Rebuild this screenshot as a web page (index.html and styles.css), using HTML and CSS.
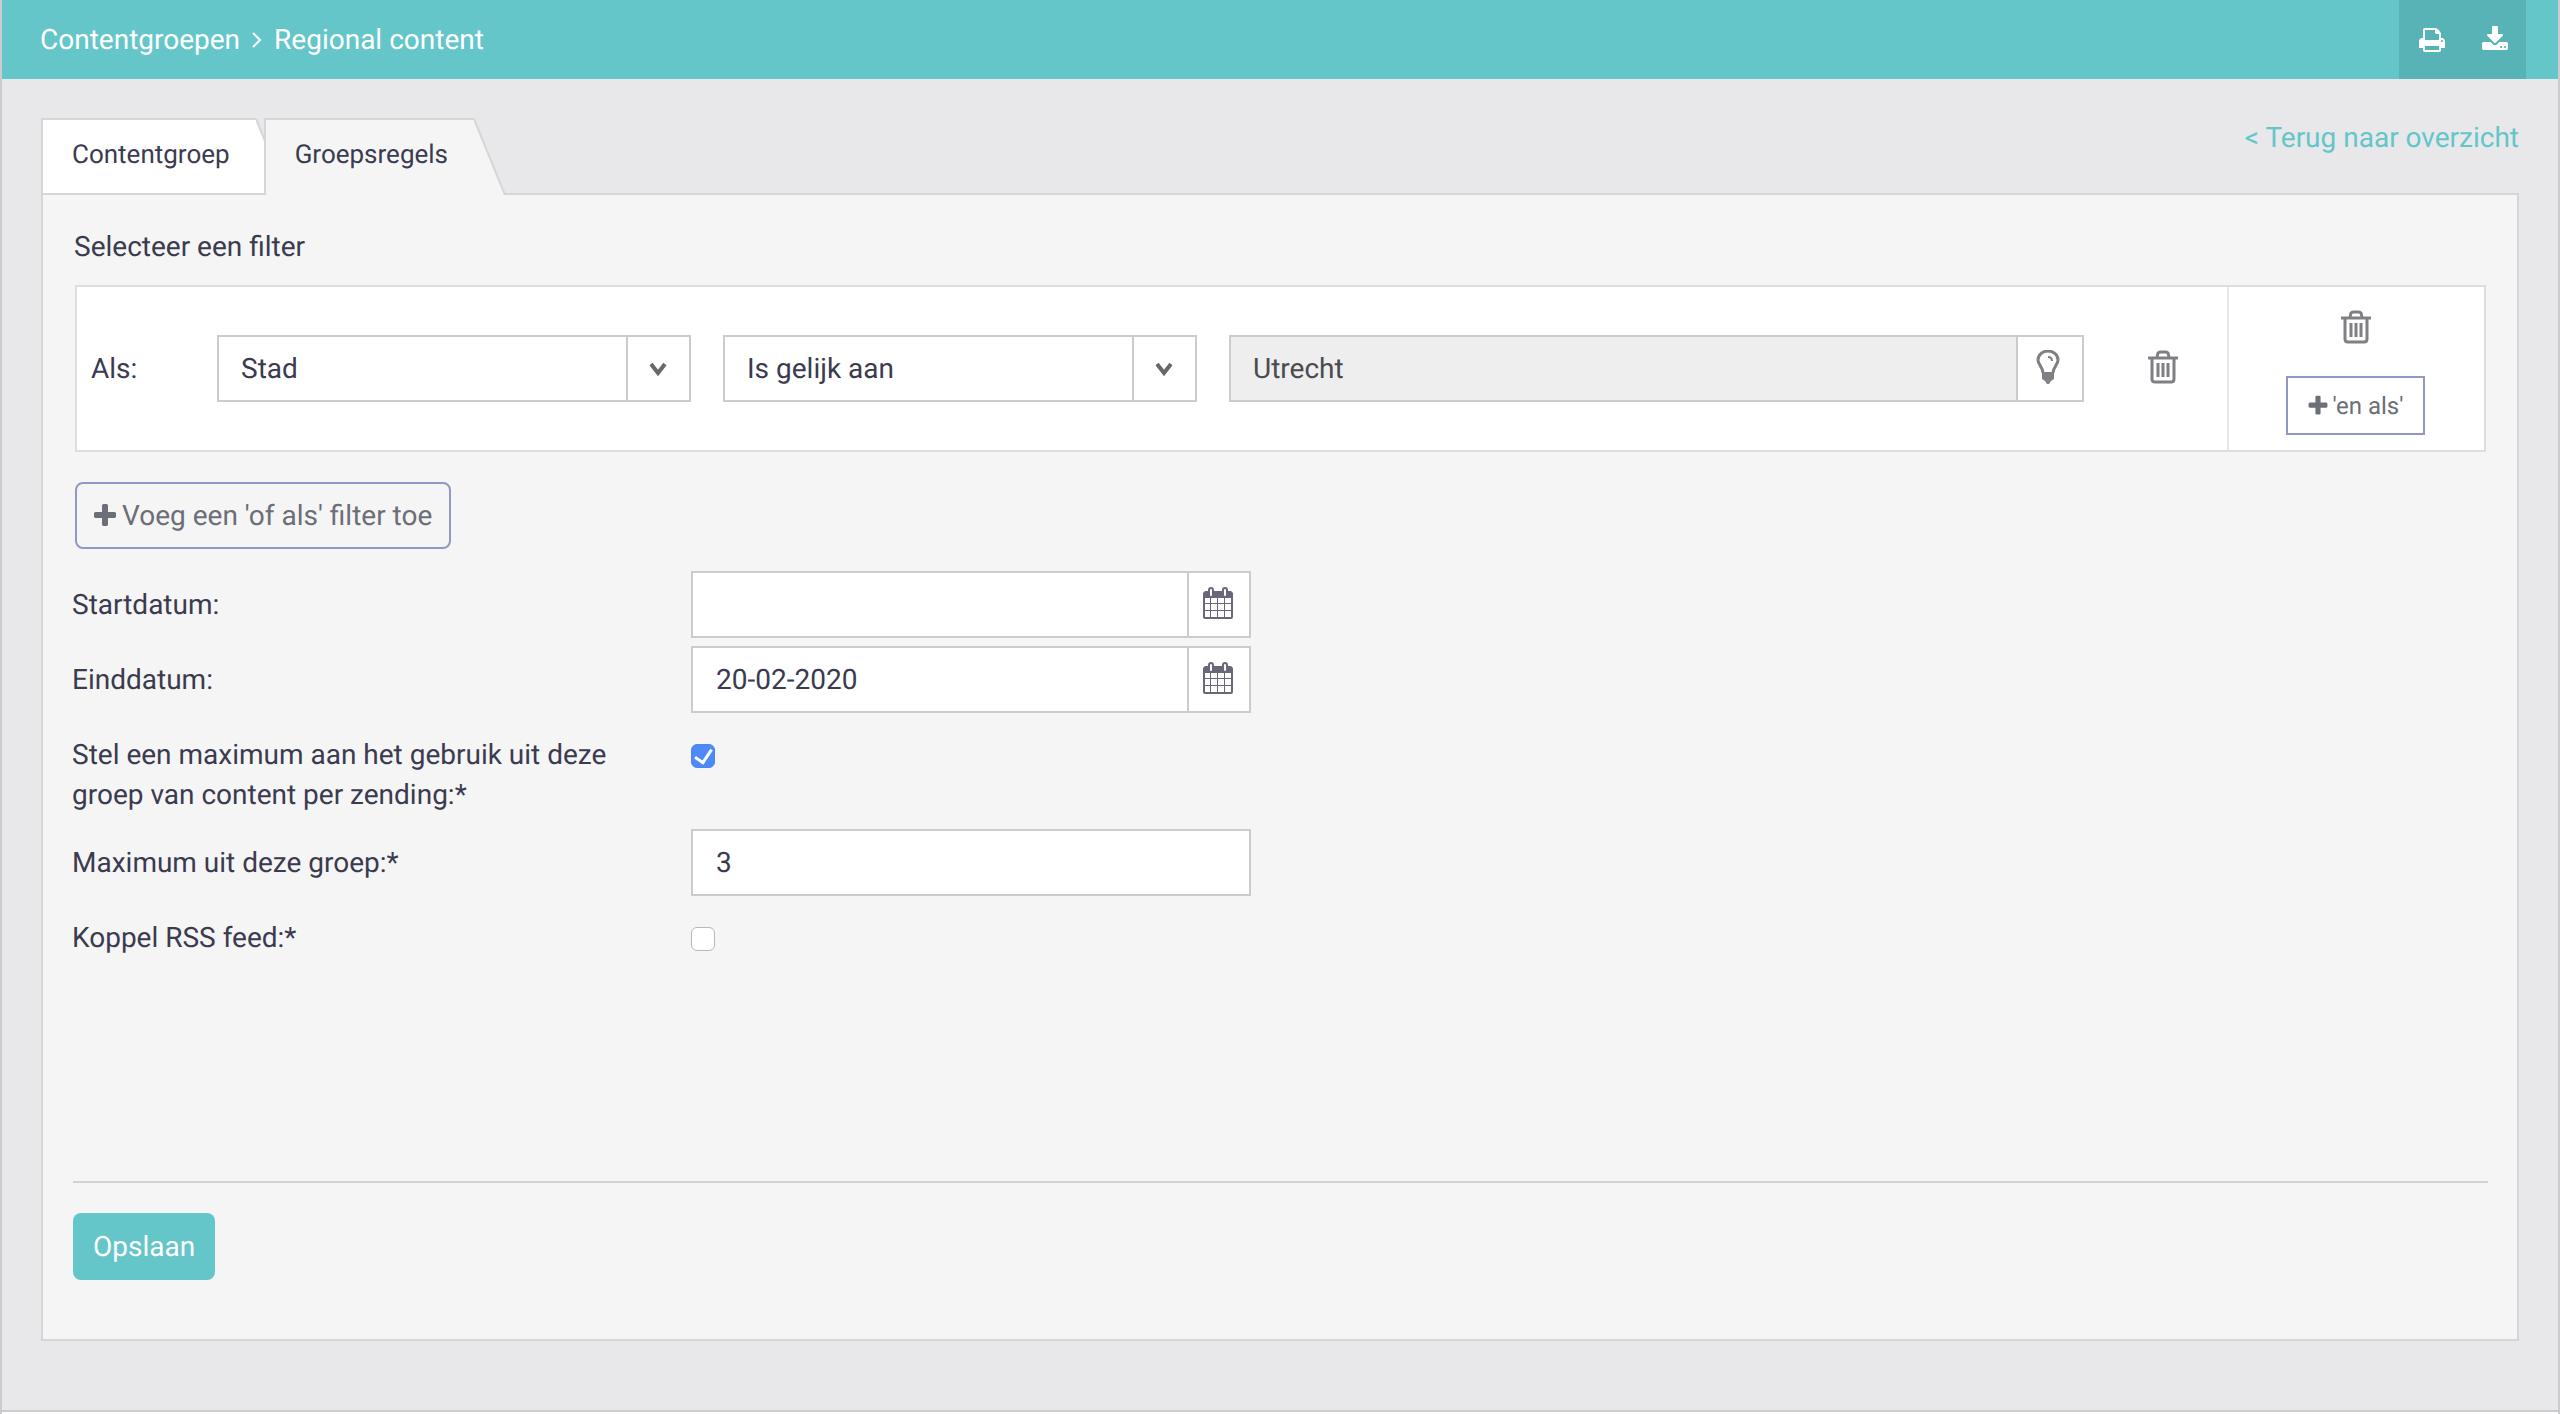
FILE: index.html
```html
<!DOCTYPE html>
<html lang="nl">
<head>
<meta charset="utf-8">
<title>Regional content</title>
<meta name="viewport" content="width=device-width, initial-scale=1">
<link rel="stylesheet" href="styles.css">
</head>
<body>
<svg class="sprite" aria-hidden="true">
  <symbol id="icon-trash" viewBox="0 0 30 34">
    <g fill="none" stroke="currentColor" stroke-width="3">
      <path d="M0 8h30"/>
      <path d="M9 7l1-4q1-1 3-1h4q2 0 3 1l1 4M4 9v20q0 3 3 3h16q3 0 3-3V9"/>
      <path d="M10 13v14M15 13v14M20 13v14"/>
    </g>
  </symbol>
  <symbol id="icon-bulb" viewBox="0 0 24 34">
    <path d="M7 23C7 17 2 15 2 10a10 9 0 0 1 20 0c0 5-5 7-5 13" fill="none" stroke="currentColor" stroke-width="3"/>
    <path d="M12 7q4 0 4 4" fill="none" stroke="currentColor" stroke-width="2"/>
    <path d="M6 22h12v7l-3 2-2 3h-2l-2-3-3-2z" fill="currentColor"/>
  </symbol>
  <symbol id="icon-calendar" viewBox="0 0 30 32">
    <path d="M2 4h26l2 2v24q0 2-2 2H2q-2 0-2-2V6z" fill="currentColor"/>
    <path d="M2 11h5v5H2zM8 11h6v5H8zM15 11h6v5h-6zM22 11h6v5h-6zM2 17h5v6H2zM8 17h6v6H8zM15 17h6v6h-6zM22 17h6v6h-6zM2 24h5v6H2zM8 24h6v6H8zM15 24h6v6h-6zM22 24h6v6h-6z" fill="#fff"/>
    <path d="M6 3q0-2 2-2t2 2v5q0 2-2 2T6 8zM20 3q0-2 2-2t2 2v5q0 2-2 2t-2-2z" fill="#fff" stroke="currentColor" stroke-width="2"/>
  </symbol>
  <symbol id="icon-plus" viewBox="0 0 1408 1792">
    <path fill="currentColor" d="M1408 736v192q0 40-28 68t-68 28h-416v416q0 40-28 68t-68 28h-192q-40 0-68-28t-28-68v-416h-416q-40 0-68-28t-28-68v-192q0-40 28-68t68-28h416v-416q0-40 28-68t68-28h192q40 0 68 28t28 68v416h416q40 0 68 28t28 68z"/>
  </symbol>
  <symbol id="icon-chevron" viewBox="0 0 18 14">
    <path d="M2 2l7 9 7-9" fill="none" stroke="currentColor" stroke-width="4"/>
  </symbol>
</svg>
<div class="page">
  <header class="topbar">
    <nav class="breadcrumb" aria-label="Kruimelpad">
      <a href="#">Contentgroepen</a>
      <svg class="crumb-sep" viewBox="0 0 10 16" aria-hidden="true"><path d="M1 1l7 7-7 7" fill="none" stroke="currentColor" stroke-width="2"/></svg>
      <a href="#">Regional content</a>
    </nav>
    <div class="tools">
      <button type="button" class="tool" aria-label="Afdrukken">
        <svg viewBox="0 0 1792 1792"><path fill="currentColor" d="M448 1536h896v-256h-896v256zm0-640h896v-384h-160q-40 0-68-28t-28-68v-160h-640v640zm1152 64q0-26-19-45t-45-19-45 19-19 45 19 45 45 19 45-19 19-45zm128 0v416q0 13-9.500 22.500t-22.500 9.500h-224v160q0 40-28 68t-68 28h-960q-40 0-68-28t-28-68v-160h-224q-13 0-22.500-9.500t-9.500-22.500v-416q0-79 56.500-135.500t135.500-56.500h64v-544q0-40 28-68t68-28h672q40 0 88 20t76 48l152 152q28 28 48 76t20 88v256h64q79 0 135.500 56.500t56.500 135.500z"/></svg>
      </button>
      <button type="button" class="tool" aria-label="Downloaden">
        <svg viewBox="0 0 1792 1792"><path fill="currentColor" d="M1344 1344q0-26-19-45t-45-19-45 19-19 45 19 45 45 19 45-19 19-45zm256 0q0-26-19-45t-45-19-45 19-19 45 19 45 45 19 45-19 19-45zm128-224v320q0 40-28 68t-68 28h-1472q-40 0-68-28t-28-68v-320q0-40 28-68t68-28h465l135 136q58 56 136 56t136-56l136-136h464q40 0 68 28t28 68zm-325-569q17 41-14 70l-448 448q-18 19-45 19t-45-19l-448-448q-31-29-14-70 17-39 59-39h256v-448q0-26 19-45t45-19h256q26 0 45 19t19 45v448h256q42 0 59 39z"/></svg>
      </button>
    </div>
  </header>

  <main class="content">
    <div class="tabrow">
      <nav class="tabs" aria-label="Tabbladen">
        <a class="tab" href="#"><span class="tab-label">Contentgroep</span><svg class="tab-edge" viewBox="0 0 32 77" preserveAspectRatio="none" aria-hidden="true"><path class="tab-fill" d="M0 0l31 77H0z"/><path class="tab-line" d="M0 1l31 76"/></svg></a>
        <a class="tab tab-active" href="#" aria-current="page"><span class="tab-label">Groepsregels</span><svg class="tab-edge" viewBox="0 0 32 77" preserveAspectRatio="none" aria-hidden="true"><path class="tab-fill" d="M0 0l31 77H0z"/><path class="tab-line" d="M0 1l31 76"/></svg></a>
      </nav>
      <a class="back" href="#">&lt; Terug naar overzicht</a>
    </div>

    <form class="panel">
      <h1 class="title">Selecteer een filter</h1>
      <div class="filter">
        <div class="rule">
          <label for="field">Als:</label>
          <div class="select">
            <select id="field"><option>Stad</option></select>
            <span class="select-arrow"><svg><use href="#icon-chevron"/></svg></span>
          </div>
          <div class="select">
            <select aria-label="Vergelijking"><option>Is gelijk aan</option></select>
            <span class="select-arrow"><svg><use href="#icon-chevron"/></svg></span>
          </div>
          <div class="combo">
            <input class="input input-locked" type="text" value="Utrecht" aria-label="Waarde" readonly>
            <button class="addon addon-wide" type="button" aria-label="Suggesties"><svg class="icon-bulb"><use href="#icon-bulb"/></svg></button>
          </div>
          <button class="trash" type="button" aria-label="Regel verwijderen"><svg><use href="#icon-trash"/></svg></button>
        </div>
        <div class="side">
          <button class="trash" type="button" aria-label="Filter verwijderen"><svg><use href="#icon-trash"/></svg></button>
          <button class="btn btn-small" type="button"><svg class="plus"><use href="#icon-plus"/></svg>'en als'</button>
        </div>
      </div>
      <button class="btn btn-add" type="button"><svg class="plus"><use href="#icon-plus"/></svg>Voeg een 'of als' filter toe</button>

      <div class="fields">
        <div class="field">
          <label for="start">Startdatum:</label>
          <div class="combo">
            <input class="input" id="start" type="text">
            <button class="addon" type="button" aria-label="Kies startdatum"><svg class="icon-calendar"><use href="#icon-calendar"/></svg></button>
          </div>
        </div>
        <div class="field">
          <label for="end">Einddatum:</label>
          <div class="combo">
            <input class="input" id="end" type="text" value="20-02-2020">
            <button class="addon" type="button" aria-label="Kies einddatum"><svg class="icon-calendar"><use href="#icon-calendar"/></svg></button>
          </div>
        </div>
        <div class="field">
          <label for="limit">Stel een maximum aan het gebruik uit deze groep van content per zending:*</label>
          <input class="check" id="limit" type="checkbox" checked>
        </div>
        <div class="field">
          <label for="max">Maximum uit deze groep:*</label>
          <input class="input" id="max" type="text" value="3">
        </div>
        <div class="field">
          <label for="rss">Koppel RSS feed:*</label>
          <input class="check" id="rss" type="checkbox">
        </div>
      </div>

      <div class="actions">
        <button class="save" type="submit">Opslaan</button>
      </div>
    </form>
  </main>
</div>
</body>
</html>
```
FILE: styles.css
```css
* { box-sizing: border-box; }

body {
  margin: 0;
  min-height: 100vh;
  border: solid #ccccd0;
  border-width: 0 2px;
  background: #fff;
  color: #3b3b50;
  font: 28px/40px Roboto, "Liberation Sans", sans-serif;
  text-rendering: geometricPrecision;
}

button, input, select { font: inherit; color: inherit; margin: 0; text-rendering: inherit; }
button { cursor: pointer; }
a { text-decoration: none; color: inherit; }
svg { display: block; }

.sprite { position: absolute; width: 0; height: 0; }

.page { background: #e8e8ea; border-bottom: 2px solid #ccccd0; }

.topbar {
  display: flex;
  justify-content: space-between;
  height: 79px;
  padding: 0 32px 0 38px;
  background: #64c6c9;
  color: #fff;
}
.breadcrumb { display: flex; align-items: center; gap: 12px; }
.crumb-sep { width: 10px; height: 16px; }
.tools { display: flex; padding-left: 1px; background: #58b3b6; }
.tool {
  display: grid;
  place-items: center;
  width: 63px;
  padding: 0;
  border: 0;
  background: none;
  color: #fff;
}
.tool svg { width: 28px; height: 28px; }

.content { padding: 39px 39px 69px; }

.tabrow { display: flex; justify-content: space-between; align-items: flex-start; height: 75px; }
.tabs { display: flex; align-items: flex-start; position: relative; z-index: 1; }
.tab { display: flex; height: 75px; margin-right: -24px; font-size: 26px; overflow: hidden; }
.tab-label {
  height: 77px;
  padding: 15px 26px 0 29px;
  border: solid #d6d6d6;
  border-width: 2px 0 0 2px;
  background: #fff;
}
.tab-edge { width: 32px; height: 77px; }
.tab-fill { fill: #fff; }
.tab-line { fill: none; stroke: #d6d6d6; stroke-width: 2; }
.tab-active { height: 77px; z-index: 1; }
.tab-active .tab-label { background: #f5f5f5; }
.tab-active .tab-fill { fill: #f5f5f5; }
.back { color: #64c6c9; }

.panel {
  padding: 32px 29px 59px;
  border: 2px solid #d6d6d6;
  background: #f5f5f5;
}
.title { margin: 0 2px 18px; font-size: 28px; font-weight: 400; }

.filter {
  display: flex;
  margin: 0 2px 30px 3px;
  border: 2px solid #dddddf;
  background: #fff;
}
.rule {
  flex: 1;
  display: grid;
  grid-template-columns: 94px 474fr 474fr 855fr 62px;
  align-items: center;
  gap: 32px;
  padding: 0 49px 0 14px;
}
.side {
  display: flex;
  flex-direction: column;
  align-items: center;
  gap: 32px;
  width: 257px;
  padding: 23px 2px 15px 0;
  border-left: 2px solid #e8e8ea;
}

.select { position: relative; }
.select select {
  display: block;
  width: 100%;
  height: 67px;
  padding: 0 72px 0 22px;
  border: 2px solid #ccccd0;
  border-radius: 0;
  background: #fff;
  appearance: none;
}
.select-arrow {
  position: absolute;
  inset: 2px 2px 2px auto;
  display: grid;
  place-items: center;
  width: 63px;
  padding-right: 2px;
  border-left: 2px solid #ccccd0;
  color: #68686c;
  pointer-events: none;
}
.select-arrow svg { width: 18px; height: 14px; }

.combo { display: flex; }
.input {
  flex: 1;
  width: 100%;
  min-width: 0;
  height: 67px;
  padding: 0 23px;
  border: 2px solid #ccc;
  border-radius: 0;
  background: #fff;
}
.input-locked { padding-left: 22px; background: #eee; color: #4a4a50; }
.addon {
  display: grid;
  place-items: center;
  width: 62px;
  padding: 0 2px 4px 0;
  border: solid #ccccd0;
  border-width: 2px 2px 2px 0;
  background: #fff;
  color: #68687a;
}
.addon-wide { width: 66px; padding-right: 4px; color: #808084; }
.icon-bulb { width: 24px; height: 34px; }
.icon-calendar { width: 30px; height: 32px; }

.trash { justify-self: end; padding: 0; border: 0; background: none; color: #808084; }
.trash svg { width: 30px; height: 34px; }
.rule .trash { padding-bottom: 4px; }

.btn {
  display: flex;
  align-items: center;
  border: 2px solid #9496c4;
  background: none;
  color: #6c6e78;
}
.btn-small { gap: 5px; height: 59px; padding: 0 20px; font-size: 24px; }
.btn-small .plus { width: 20px; height: 24px; }
.btn-add { gap: 6px; height: 67px; margin-left: 3px; padding: 0 17px; border-radius: 8px; }
.plus { width: 22px; height: 28px; }

.fields { display: grid; gap: 8px; margin-top: 22px; }
.field {
  display: grid;
  grid-template-columns: 547px 560px;
  column-gap: 72px;
  align-items: start;
  min-height: 67px;
}
.field label { padding: 14px 0 6px; }

.check {
  display: grid;
  place-items: center;
  width: 24px;
  height: 24px;
  margin-top: 23px;
  border: 1px solid #b8b8b8;
  border-radius: 6px;
  background: #fff;
  appearance: none;
}
.check:checked { border-color: #4a87f0; background: #4d8af5; }
.check:checked::before {
  content: "";
  width: 8px;
  height: 14px;
  margin-bottom: 4px;
  border: solid #fff;
  border-width: 0 3px 3px 0;
  rotate: 34deg;
}

.actions { margin: 210px 0 0 1px; padding-top: 30px; border-top: 2px solid #d2d2d6; }
.save {
  height: 67px;
  padding: 0 20px;
  border: 0;
  border-radius: 8px;
  background: #64c6c9;
  color: #fff;
}
```
